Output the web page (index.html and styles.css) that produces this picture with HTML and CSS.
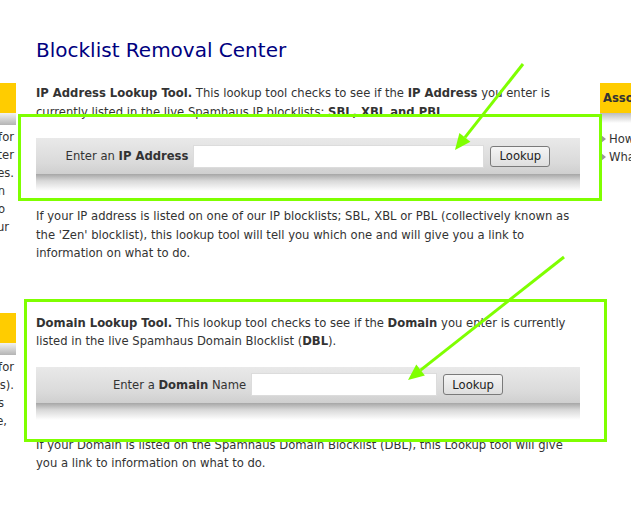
FILE: index.html
```html
<!DOCTYPE html>
<html>
<head>
<meta charset="utf-8">
<title>Blocklist Removal Center</title>
<link rel="stylesheet" href="styles.css">
</head>
<body>
<div class="page">
  <aside class="left">
    <div class="side-box first">
      <div class="side-head"></div>
      <div class="side-shade"></div>
      <div class="side-text">
        <div class="ln e13">for</div>
        <div class="ln e13">after</div>
        <div class="ln e13">addresses.</div>
        <div class="ln e5">in</div>
        <div class="ln e5">to</div>
        <div class="ln e9">your</div>
      </div>
    </div>
    <div class="side-box second">
      <div class="side-head"></div>
      <div class="side-shade"></div>
      <div class="side-text">
        <div class="ln e13">for</div>
        <div class="ln e13">names).</div>
        <div class="ln e4">is</div>
        <div class="ln e7">sure,</div>
      </div>
    </div>
  </aside>

  <main class="main">
    <h1 class="title">Blocklist Removal Center</h1>
    <p class="para first-para"><b>IP Address Lookup Tool.</b> This lookup tool checks to see if the <b>IP Address</b> you enter is currently listed in the live Spamhaus IP blocklists: <b>SBL, XBL and PBL</b></p>
    <form class="bar">
      <label class="bar-label" for="ip">Enter an <b>IP Address</b></label>
      <input class="bar-input ip-input" id="ip" type="text">
      <button class="bar-btn" type="button">Lookup</button>
    </form>
    <p class="para">If your IP address is listed on one of our IP blocklists; SBL, XBL or PBL (collectively known as the 'Zen' blocklist), this lookup tool will tell you which one and will give you a link to information on what to do.</p>

    <p class="para section"><b>Domain Lookup Tool.</b> This lookup tool checks to see if the <b>Domain</b> you enter is currently listed in the live Spamhaus Domain Blocklist (<b>DBL</b>).</p>
    <form class="bar domain-bar">
      <label class="bar-label" for="dom">Enter a <b>Domain</b> Name</label>
      <input class="bar-input dom-input" id="dom" type="text">
      <button class="bar-btn" type="button">Lookup</button>
    </form>
    <p class="para">If your Domain is listed on the Spamhaus Domain Blocklist (DBL), this Lookup tool will give you a link to information on what to do.</p>
  </main>

  <aside class="right">
    <div class="side-head right-head">Associated Documents</div>
    <div class="side-shade right-shade"></div>
    <ul class="right-list">
      <li>How to use the lookup</li>
      <li>What is a blocklist?</li>
    </ul>
  </aside>

  <svg class="annot" width="631" height="515" viewBox="0 0 631 515">
    <rect x="19.5" y="115.5" width="581" height="84" fill="none" stroke="#7fff00" stroke-width="3"/>
    <rect x="25.5" y="300.5" width="580" height="140" fill="none" stroke="#7fff00" stroke-width="3"/>
    <line x1="523" y1="64" x2="465" y2="137.4" stroke="#7fff00" stroke-width="3"/>
    <polygon points="455,150 470.4,141.7 459.4,133.1" fill="#7fff00"/>
    <line x1="564" y1="257" x2="420.6" y2="370.1" stroke="#7fff00" stroke-width="3"/>
    <polygon points="408,380 424.9,375.6 416.3,364.6" fill="#7fff00"/>
  </svg>
</div>
</body>
</html>
```

FILE: styles.css
```css
* { box-sizing: border-box; }

html, body {
  margin: 0;
  padding: 0;
  background: #fff;
}

body {
  width: 631px;
  height: 515px;
  overflow: hidden;
  font-family: "DejaVu Sans", Verdana, sans-serif;
  font-size: 11.6px;
  color: #333;
}

.page {
  position: relative;
  display: grid;
  grid-template-columns: 16px 584px 31px;
  width: 631px;
  height: 515px;
}

/* left sidebar (cut off) */
.left {
  overflow: hidden;
  display: flex;
  flex-direction: column;
}

.side-box.first { margin-top: 83px; }
.side-box.second { margin-top: 77px; }

.side-head {
  height: 30px;
  background: #ffcc00;
}

.side-shade {
  height: 12px;
  background: linear-gradient(#f2f2f2, #b4b4b4);
}

.side-text {
  padding-top: 3px;
  line-height: 18px;
}

.ln {
  display: flex;
  justify-content: flex-end;
  white-space: nowrap;
}
.ln.e13 { padding-right: 2px; }
.ln.e9 { padding-right: 7px; }
.ln.e7 { padding-right: 9px; }
.ln.e5 { padding-right: 11px; }
.ln.e4 { padding-right: 12px; }

/* main column */
.main {
  padding: 0 0 0 20px;
  width: 584px;
}

.title {
  margin: 38px 0 0 0;
  font-size: 20px;
  font-weight: normal;
  line-height: 24px;
  color: #000080;
}

.para {
  margin: 0;
  width: 545px;
  line-height: 18.5px;
}

.first-para { margin-top: 22px; }

.section { margin-top: 51px; }

.bar {
  position: relative;
  width: 544px;
  height: 36px;
  margin: 17px 0 33px 0;
  display: flex;
  align-items: center;
  justify-content: center;
  gap: 5px;
  background: linear-gradient(#e9e9e9, #dadada 70%, #cfcfcf);
}

.bar.domain-bar { margin-top: 16px; }

.bar::after {
  content: "";
  position: absolute;
  left: 0;
  right: 0;
  top: 36px;
  height: 17px;
  background: linear-gradient(#a6a6a6, #d8d8d8 40%, #fff);
}

.bar-label {
  color: #333;
  margin-right: 0;
}

.bar-input {
  height: 23px;
  border: 1px solid #dcdcdc;
  background: #fff;
  padding: 0 3px;
  margin: 0;
}

.ip-input { width: 291px; }
.dom-input { width: 186px; }

.bar-btn {
  height: 21px;
  width: 60px;
  padding: 0;
  margin: 0 0 0 1px;
  border: 1px solid #7a7a7a;
  border-radius: 3px;
  background: linear-gradient(#f5f5f5, #dedede);
  font-family: "DejaVu Sans", Verdana, sans-serif;
  font-size: 11.6px;
  color: #222;
}

/* right sidebar (cut off) */
.right {
  overflow: hidden;
  padding-top: 83px;
}

.right-head {
  height: 30px;
  line-height: 30px;
  padding-left: 3px;
  font-weight: bold;
  white-space: nowrap;
  color: #333;
}

.right-shade {
  height: 10px;
  background: linear-gradient(#bdbdbd, #fff);
}

.right-list {
  list-style: none;
  margin: 7px 0 0 0;
  padding: 0;
  line-height: 18px;
  white-space: nowrap;
}

.right-list li {
  display: flex;
  align-items: center;
  gap: 3px;
  padding-left: 1px;
}

.right-list li::before {
  content: "";
  width: 0;
  height: 0;
  border-top: 4px solid transparent;
  border-bottom: 4px solid transparent;
  border-left: 5px solid #9a9a9a;
}

.annot {
  position: absolute;
  top: 0;
  left: 0;
  pointer-events: none;
}
```
